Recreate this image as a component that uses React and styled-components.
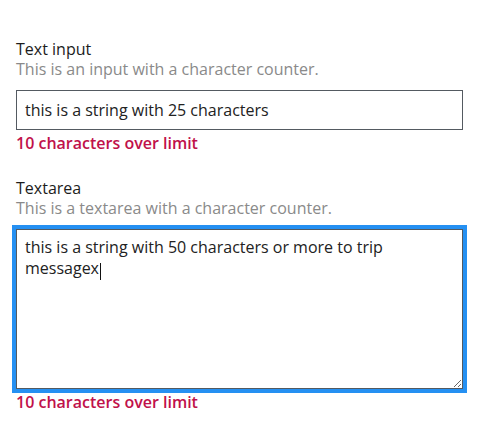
import React, { useEffect, useRef } from 'react';
import styled, { createGlobalStyle } from 'styled-components';

const GlobalStyle = createGlobalStyle`
  body {
    margin: 0;
    background: #fff;
    font-family: 'Open Sans', 'Noto Sans', sans-serif;
  }
`;

const Page = styled.div`
  padding: 39px 16px 0 16px;
  display: flex;
  flex-direction: column;
  gap: 25px;
`;

const Field = styled.div`
  display: flex;
  flex-direction: column;
`;

const Label = styled.label`
  font-size: 16px;
  line-height: 20px;
  color: #1c1c1c;
`;

const Hint = styled.div`
  font-size: 16px;
  line-height: 20px;
  color: #8a8a8a;
  margin-bottom: 11px;
`;

const Input = styled.input`
  box-sizing: border-box;
  width: 100%;
  height: 40px;
  padding: 0 8px;
  border: 1px solid #545a61;
  border-radius: 0;
  font-family: inherit;
  font-size: 16px;
  color: #222;
  outline: none;
`;

const AreaWrap = styled.div`
  position: relative;
`;

const TextArea = styled.textarea`
  box-sizing: border-box;
  width: 100%;
  height: 160px;
  padding: 7px 8px 6px 8px;
  border: 1px solid #545a61;
  border-radius: 0;
  font-family: inherit;
  font-size: 16px;
  line-height: 21px;
  color: #222;
  resize: vertical;
  outline: ${p => (p.$focused ? '4px solid #2590f2' : 'none')};
  outline-offset: 0;
  display: block;
  caret-color: transparent;
  &:focus {
    outline: 4px solid #2590f2;
  }
`;

const Caret = styled.span`
  position: absolute;
  left: 84px;
  top: 34px;
  width: 1px;
  height: 17px;
  background: #111;
  pointer-events: none;
`;

const Error = styled.div`
  margin-top: 3px;
  font-size: 16px;
  line-height: 20px;
  font-weight: 600;
  color: #c0114a;
`;

export default function App() {
  const ref = useRef(null);
  const areaText = 'this is a string with 50 characters or more to trip messagex';

  useEffect(() => {
    if (ref.current) {
      ref.current.focus();
      ref.current.setSelectionRange(areaText.length, areaText.length);
    }
  }, []);

  return (
    <>
      <GlobalStyle />
      <Page>
        <Field>
          <Label>Text input</Label>
          <Hint>This is an input with a character counter.</Hint>
          <Input defaultValue="this is a string with 25 characters" />
          <Error>10 characters over limit</Error>
        </Field>
        <Field>
          <Label>Textarea</Label>
          <Hint>This is a textarea with a character counter.</Hint>
          <AreaWrap>
            <TextArea ref={ref} $focused defaultValue={areaText} />
            <Caret />
          </AreaWrap>
          <Error>10 characters over limit</Error>
        </Field>
      </Page>
    </>
  );
}
